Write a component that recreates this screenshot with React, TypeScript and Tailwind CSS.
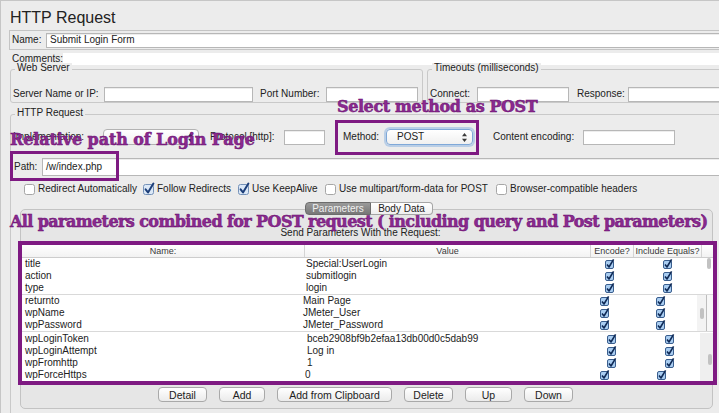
import React from "react";

type Kids = { className?: string; children?: React.ReactNode };

function Field({ className = "", children }: Kids) {
  return (
    <div
      className={`flex shrink-0 items-center border border-[#b7b7b7] bg-white pl-[3px] shadow-[inset_0_1px_0_rgba(0,0,0,0.07)] ${className}`}
    >
      {children}
    </div>
  );
}

function Titled({ title, className = "", children }: Kids & { title: string }) {
  return (
    <div className={`shrink-0 rounded-[3px] border border-[#c9c9c9] ${className}`}>
      <div className="-mt-[7px] ml-[4px] w-fit bg-[#ececec] px-[2px] leading-[10px]">{title}</div>
      {children}
    </div>
  );
}

function Arrows() {
  return (
    <svg width="5" height="9" viewBox="0 0 5 9">
      <path d="M2.5 0 L5 3.3 H0 Z M2.5 9 L5 5.7 H0 Z" fill="#3a3a3a" />
    </svg>
  );
}

function Select({ value, focus, className = "" }: { value: string; focus?: boolean; className?: string }) {
  return (
    <div
      className={`flex h-[16px] shrink-0 items-center justify-between rounded-[4px] border bg-gradient-to-b from-white to-[#f0f0f0] pl-[10px] pr-[5px] ${
        focus ? "border-[#7fa8d8] shadow-[0_0_0_2px_rgba(125,170,225,0.45)]" : "border-[#b3b3b3]"
      } ${className}`}
    >
      <span>{value}</span>
      <Arrows />
    </div>
  );
}

function Check({ on }: { on?: boolean }) {
  return (
    <svg width="11" height="12" viewBox="0 0 11 12" className="shrink-0 overflow-visible">
      <rect
        x="0.5"
        y="1.5"
        width="10"
        height="10"
        rx="2"
        fill={on ? "#dbe8f7" : "#ffffff"}
        stroke={on ? "#7491b8" : "#a6a6a6"}
      />
      {on && (
        <path
          d="M2.6 6.4 L5 9.4 L10.4 0.6"
          fill="none"
          stroke="#1c3e79"
          strokeWidth="2"
          strokeLinecap="round"
          strokeLinejoin="round"
        />
      )}
    </svg>
  );
}

function TCheck() {
  return (
    <svg width="9" height="10" viewBox="0 0 9 10" className="shrink-0 overflow-visible">
      <rect x="0.5" y="1.5" width="8" height="8" rx="1.5" fill="#a9cdf1" stroke="#3a5e8e" />
      <path d="M2 5.4 L4 8 L8.6 0.4" fill="none" stroke="#0f2a56" strokeWidth="1.6" strokeLinejoin="round" />
    </svg>
  );
}

function Btn({ label, w }: { label: string; w: string }) {
  return (
    <div
      className={`flex h-[15px] shrink-0 items-center justify-center rounded-[4px] border border-[#a9a9a9] bg-gradient-to-b from-white to-[#ebebeb] text-[10.5px] ${w}`}
    >
      {label}
    </div>
  );
}

const options: [string, boolean, string][] = [
  ["Redirect Automatically", false, "w-[119px]"],
  ["Follow Redirects", true, "w-[95px]"],
  ["Use KeepAlive", true, "w-[87px]"],
  ["Use multipart/form-data for POST", false, "w-[171px]"],
  ["Browser-compatible headers", false, ""],
];

function ParamRow({
  name,
  value,
  nameW,
  valueW,
  encMl,
  incMl,
}: {
  name: string;
  value: string;
  nameW: string;
  valueW: string;
  encMl: string;
  incMl: string;
}) {
  return (
    <div className="flex h-[12px] items-center">
      <span className={`shrink-0 pl-[3px] ${nameW}`}>{name}</span>
      <span className={`shrink-0 ${valueW}`}>{value}</span>
      <span className={encMl}>
        <TCheck />
      </span>
      <span className={incMl}>
        <TCheck />
      </span>
    </div>
  );
}

const note =
  "absolute whitespace-nowrap font-['DejaVu_Serif',serif] text-[16px] font-bold leading-[18px] text-[#8a2a8f] [-webkit-text-stroke:0.5px_#6a0d70]";

export default function App() {
  return (
    <div className="relative h-[413px] w-[719px] overflow-hidden border-l border-t border-[#c6c6c6] bg-[#ececec] font-['Liberation_Sans',Arial,sans-serif] text-[10px] leading-[12px] text-[#222]">
      <div className="pl-[9px] pt-[8px] text-[16px] leading-[18px]">HTTP Request</div>

      <div className="ml-[8px] mt-[3px] flex h-[20px] w-[720px] items-center border border-[#c4c4c4]">
        <span className="w-[36px] shrink-0 pl-[2px]">Name:</span>
        <Field className="h-[15px] flex-1">Submit Login Form</Field>
      </div>

      <div className="mt-[1px] flex h-[15px] items-center pl-[11px]">
        <span className="w-[51px] shrink-0">Comments:</span>
        <div className="h-[12px] flex-1 bg-white" />
      </div>

      <div className="mt-[3px] flex">
        <Titled title="Web Server" className="ml-[9px] w-[413px]">
          <div className="mt-[13px] flex h-[16px] items-center pl-[2px]">
            <span className="w-[91px] shrink-0">Server Name or IP:</span>
            <Field className="h-[15px] w-[149px]" />
            <span className="ml-[7px] w-[66px] shrink-0">Port Number:</span>
            <Field className="h-[15px] w-[92px]" />
          </div>
        </Titled>
        <Titled title="Timeouts (milliseconds)" className="ml-[4px] w-[300px]">
          <div className="mt-[13px] flex h-[16px] items-center pl-[2px]">
            <span className="w-[47px] shrink-0">Connect:</span>
            <Field className="h-[15px] w-[92px]" />
            <span className="ml-[8px] w-[51px] shrink-0">Response:</span>
            <Field className="h-[15px] w-[92px]" />
          </div>
        </Titled>
      </div>

      <Titled title="HTTP Request" className="ml-[9px] mt-[11px] w-[730px] pb-[20px]">
        <div className="mt-[11px] flex h-[16px] items-center pl-[2px]">
          <span className="w-[90px] shrink-0">Implementation:</span>
          <Select value="" className="w-[96px]" />
          <span className="ml-[11px] w-[74px] shrink-0">Protocol [http]:</span>
          <Field className="h-[15px] w-[41px]" />
          <span className="ml-[18px] w-[43px] shrink-0">Method:</span>
          <Select value="POST" focus className="w-[87px]" />
          <span className="ml-[20px] w-[90px] shrink-0">Content encoding:</span>
          <Field className="h-[15px] w-[92px]" />
        </div>

        <div className="mt-[13px] flex h-[18px] items-center pl-[3px]">
          <span className="w-[28px] shrink-0">Path:</span>
          <Field className="h-[18px] flex-1">/w/index.php</Field>
        </div>

        <div className="mt-[7px] flex h-[12px] items-center pl-[13px]">
          {options.map(([label, on, w]) => (
            <div key={label} className={`flex shrink-0 items-center gap-[3px] ${w}`}>
              <Check on={on} />
              <span>{label}</span>
            </div>
          ))}
        </div>

        <div className="relative z-10 mt-[7px] ml-[294px] flex h-[13px]">
          <div className="flex w-[66px] items-center justify-center rounded-l-[4px] border border-[#6c6c6c] bg-gradient-to-b from-[#9a9a9a] to-[#777] text-[#f0f0f0]">
            Parameters
          </div>
          <div className="flex w-[62px] items-center justify-center rounded-r-[4px] border border-l-0 border-[#a5a5a5] bg-gradient-to-b from-white to-[#efefef]">
            Body Data
          </div>
        </div>

        <div className="ml-[9px] -mt-[6px] w-[693px] rounded-[5px] border border-[#c3c3c3] bg-[#e6e6e6] pb-[6px] pt-[17px]">
          <div className="h-[12px] pr-[12px] text-center">Send Parameters With the Request:</div>

          <div className="-ml-[3px] mt-[2px] w-[699px] border-[4px] border-[#7e1a82] bg-white">
            <div className="flex h-[13px] items-center border-b border-[#cdcdcd] bg-gradient-to-b from-white to-[#f2f2f2] text-[9px] text-[#3a3a3a]">
              <div className="w-[283px] shrink-0 border-r border-[#d4d4d4] text-center">Name:</div>
              <div className="w-[286px] shrink-0 border-r border-[#d4d4d4] text-center">Value</div>
              <div className="w-[43px] shrink-0 border-r border-[#d4d4d4] text-center">Encode?</div>
              <div className="w-[68px] shrink-0 whitespace-nowrap border-r border-[#d4d4d4] text-center">
                Include Equals?
              </div>
            </div>

            <div className="flex h-[36px]">
              <div className="w-[681px] shrink-0">
                {[
                  ["title", "Special:UserLogin"],
                  ["action", "submitlogin"],
                  ["type", "login"],
                ].map(([n, v]) => (
                  <ParamRow key={n} name={n} value={v} nameW="w-[283px]" valueW="w-[286px] pl-[1px]" encMl="ml-[14px]" incMl="ml-[49px]" />
                ))}
              </div>
              <div className="flex-1 pl-[4px]">
                <div className="h-[11px] w-[4px] rounded-full bg-[#c2c2c2]" />
              </div>
            </div>

            <div className="flex h-[37px] border-t border-[#d9d9d9]">
              <div className="w-[675px] shrink-0">
                {[
                  ["returnto", "Main Page"],
                  ["wpName", "JMeter_User"],
                  ["wpPassword", "JMeter_Password"],
                ].map(([n, v]) => (
                  <ParamRow key={n} name={n} value={v} nameW="w-[281px]" valueW="w-[288px]" encMl="ml-[9px]" incMl="ml-[47px]" />
                ))}
              </div>
              <div className="w-[10px] shrink-0 border-r border-[#bdbdbd] bg-[#f3f3f3] pl-[3px] pt-[13px]">
                <div className="h-[11px] w-[4px] rounded-full bg-[#c2c2c2]" />
              </div>
              <div className="flex-1 bg-[#f7f7f7]" />
            </div>

            <div className="flex h-[50px] border-t border-[#d9d9d9] pt-[1px]">
              <div className="w-[678px] shrink-0">
                {[
                  ["wpLoginToken", "bceb2908bf9b2efaa13db00d0c5dab99"],
                  ["wpLoginAttempt", "Log in"],
                  ["wpFromhttp", "1"],
                ].map(([n, v]) => (
                  <ParamRow key={n} name={n} value={v} nameW="w-[285px]" valueW="w-[284px]" encMl="ml-[16px]" incMl="ml-[49px]" />
                ))}
                <ParamRow name="wpForceHttps" value="0" nameW="w-[283px]" valueW="w-[286px]" encMl="ml-[9px]" incMl="ml-[48px]" />
              </div>
              <div className="flex-1 bg-[#efefef] pl-[8px] pt-[21px]">
                <div className="h-[11px] w-[4px] rounded-full bg-[#c2c2c2]" />
              </div>
            </div>
          </div>

          <div className="mt-[2px] flex gap-[12px] pl-[137px]">
            <Btn label="Detail" w="w-[49px]" />
            <Btn label="Add" w="w-[46px]" />
            <Btn label="Add from Clipboard" w="w-[115px]" />
            <Btn label="Delete" w="w-[49px]" />
            <Btn label="Up" w="w-[47px]" />
            <Btn label="Down" w="w-[49px]" />
          </div>
        </div>
      </Titled>

      {/* annotations drawn over the screenshot */}
      <div className="absolute left-[334px] top-[119px] h-[35px] w-[144px] border-[3px] border-[#7e1a82]" />
      <div className="absolute left-[9px] top-[150px] h-[30px] w-[109px] border-[3px] border-[#7e1a82]" />
      <div className={`${note} left-[336px] top-[97px] tracking-[-0.4px]`}>Select method as POST</div>
      <div className={`${note} left-[9px] top-[130px] tracking-[-0.1px]`}>Relative path of Login Page</div>
      <div className={`${note} left-[9px] top-[212px] tracking-[-0.6px]`}>
        All parameters combined for POST request ( including query and Post parameters)
      </div>
    </div>
  );
}
